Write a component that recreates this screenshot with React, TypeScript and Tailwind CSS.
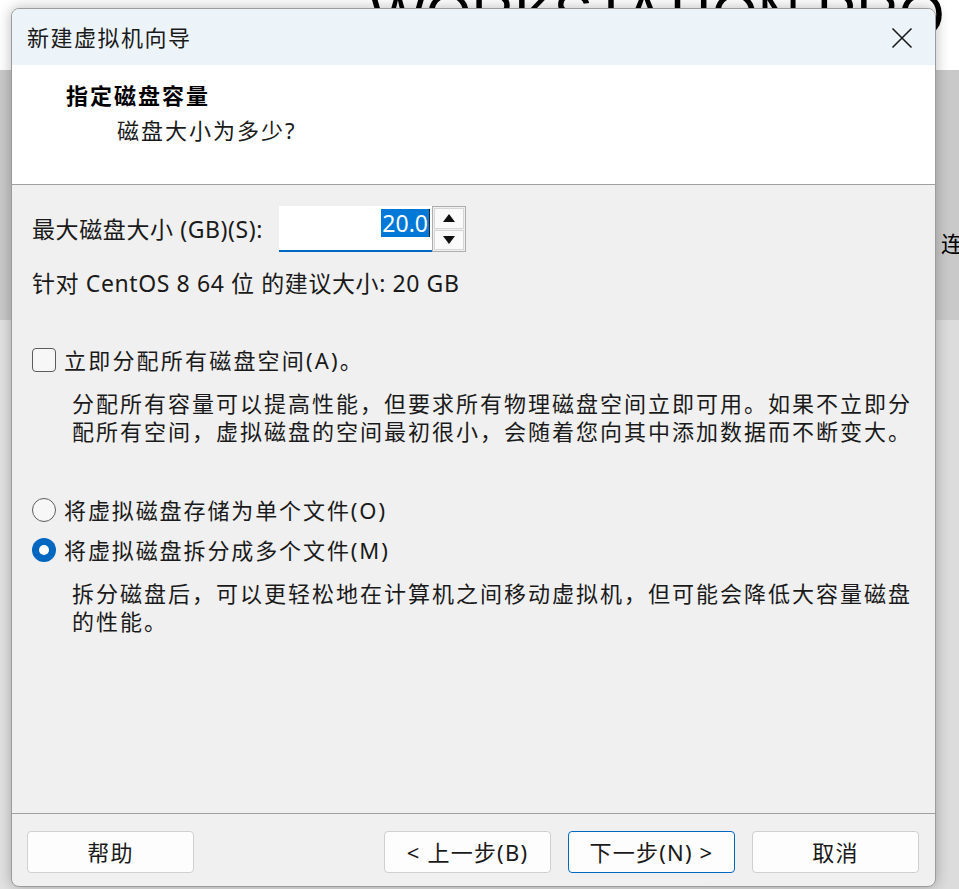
import React from "react";

const F = "font-['Noto_Sans','Noto_Sans_CJK_SC',sans-serif]";

function Button({ label, primary }: { label: string; primary?: boolean }) {
  return (
    <div
      className={`w-[167px] h-[42px] flex items-center justify-center rounded-[4px] bg-[#fdfdfd] text-[22px] tracking-[1.2px] text-[#1a1a1a] border ${
        primary ? "border-[#0067c0]" : "border-[#d0d0d0]"
      }`}
    >
      {label}
    </div>
  );
}

export default function App() {
  return (
    <div className={`relative w-[959px] h-[889px] overflow-hidden bg-[#e6e6e6] ${F}`}>
      {/* background application */}
      <div className="h-[70px] bg-white overflow-hidden">
        <div className="mt-[-14px] pl-[370px] text-[59px] leading-none text-black font-['Liberation_Sans',sans-serif] whitespace-nowrap">
          WORKSTATION PRO
        </div>
      </div>
      <div className="h-[250px] bg-[#c9c9c9] flex items-start justify-end pt-[158px]">
        <span className="text-[22px] leading-[30px] text-black mr-[-4px]">连</span>
      </div>
      <div className="h-[569px] bg-gradient-to-r from-[#e2e2e2] to-[#dcdcdc]" />

      {/* dialog window */}
      <div className="absolute left-[11px] top-[8px] w-[925px] h-[879px] rounded-[8px] border border-[#9c9c9c] bg-[#f0f0f0] overflow-hidden flex flex-col shadow-[0_0_14px_rgba(0,0,0,0.28)]">
        {/* title bar */}
        <div className="h-[56px] shrink-0 bg-[#edf4f9] flex items-center justify-between pl-[15px] pr-[22px]">
          <span className="text-[22px] text-[#1a1a1a] tracking-[1.5px]">新建虚拟机向导</span>
          <svg width="22" height="22" viewBox="0 0 22 22" className="mt-[2px]">
            <path d="M1.5 1.5 L20.5 20.5 M20.5 1.5 L1.5 20.5" stroke="#1a1a1a" strokeWidth="1.6" fill="none" />
          </svg>
        </div>

        {/* header */}
        <div className="h-[120px] shrink-0 bg-white border-b border-[#a0a0a0] pl-[54px] pt-[14px]">
          <div className="text-[22px] font-bold leading-[32px] text-black tracking-[2px]">指定磁盘容量</div>
          <div className="text-[22px] leading-[32px] text-[#1a1a1a] pl-[51px] mt-[3px] tracking-[2px]">
            磁盘大小为多少?
          </div>
        </div>

        {/* body */}
        <div className="flex-1 pl-[20px] pt-[21px] text-[#1a1a1a]">
          <div className="flex items-center h-[46px]">
            <span className="text-[23px] w-[247px] tracking-[0.6px] whitespace-nowrap">最大磁盘大小 (GB)(S):</span>
            <div className="w-[153px] h-[46px] bg-white border-b-2 border-[#0067c0] flex items-start justify-end pt-[3px] pr-[2px]">
              <span className="bg-[#0078d7] text-white text-[23px] leading-[28px] px-[1px]">20.0</span>
              <span className="w-[1px] h-[28px] bg-[#222]" />
            </div>
            <div className="w-[34px] h-[46px] border border-[#adadad] bg-[#f0f0f0] flex flex-col p-[1px] gap-[1px]">
              <div className="flex-1 bg-[#fafafa] border border-[#d6d6d6] flex items-center justify-center">
                <svg width="12" height="8" viewBox="0 0 12 8">
                  <path d="M6 0 L12 8 L0 8 Z" fill="#111" />
                </svg>
              </div>
              <div className="flex-1 bg-[#fafafa] border border-[#d6d6d6] flex items-center justify-center">
                <svg width="12" height="8" viewBox="0 0 12 8">
                  <path d="M0 0 L12 0 L6 8 Z" fill="#111" />
                </svg>
              </div>
            </div>
          </div>

          <div className="mt-[17px] text-[23px] leading-[28px] tracking-[0.6px]">针对 CentOS 8 64 位 的建议大小: 20 GB</div>

          <div className="mt-[49px] flex items-center h-[28px]">
            <div className="w-[24px] h-[24px] rounded-[4px] border-[1.5px] border-[#5c5c5c] bg-[#f7f7f7]" />
            <span className="ml-[8px] text-[22px] tracking-[2.2px]">立即分配所有磁盘空间(A)。</span>
          </div>
          <div className="mt-[15px] pl-[40px] text-[22px] leading-[28px] tracking-[2px] whitespace-nowrap">
            分配所有容量可以提高性能，但要求所有物理磁盘空间立即可用。如果不立即分
            <br />
            配所有空间，虚拟磁盘的空间最初很小，会随着您向其中添加数据而不断变大。
          </div>

          <div className="mt-[51px] flex items-center h-[28px]">
            <div className="w-[24px] h-[24px] rounded-full border-[1.5px] border-[#5c5c5c] bg-[#f7f7f7]" />
            <span className="ml-[8px] text-[22px] tracking-[1.9px]">将虚拟磁盘存储为单个文件(O)</span>
          </div>
          <div className="mt-[12px] flex items-center h-[28px]">
            <div className="w-[24px] h-[24px] rounded-full bg-[#0067c0] flex items-center justify-center">
              <div className="w-[10px] h-[10px] rounded-full bg-white" />
            </div>
            <span className="ml-[8px] text-[22px] tracking-[1.9px]">将虚拟磁盘拆分成多个文件(M)</span>
          </div>
          <div className="mt-[15px] pl-[40px] text-[22px] leading-[28px] tracking-[2px] whitespace-nowrap">
            拆分磁盘后，可以更轻松地在计算机之间移动虚拟机，但可能会降低大容量磁盘
            <br />
            的性能。
          </div>
        </div>

        {/* footer */}
        <div className="h-[73px] shrink-0 border-t border-[#a0a0a0] flex items-start pt-[17px] pl-[15px] pr-[16px]">
          <Button label="帮助" />
          <div className="flex-1" />
          <div className="flex gap-[17px]">
            <Button label="< 上一步(B)" />
            <Button label="下一步(N) >" primary />
            <Button label="取消" />
          </div>
        </div>
      </div>
    </div>
  );
}
